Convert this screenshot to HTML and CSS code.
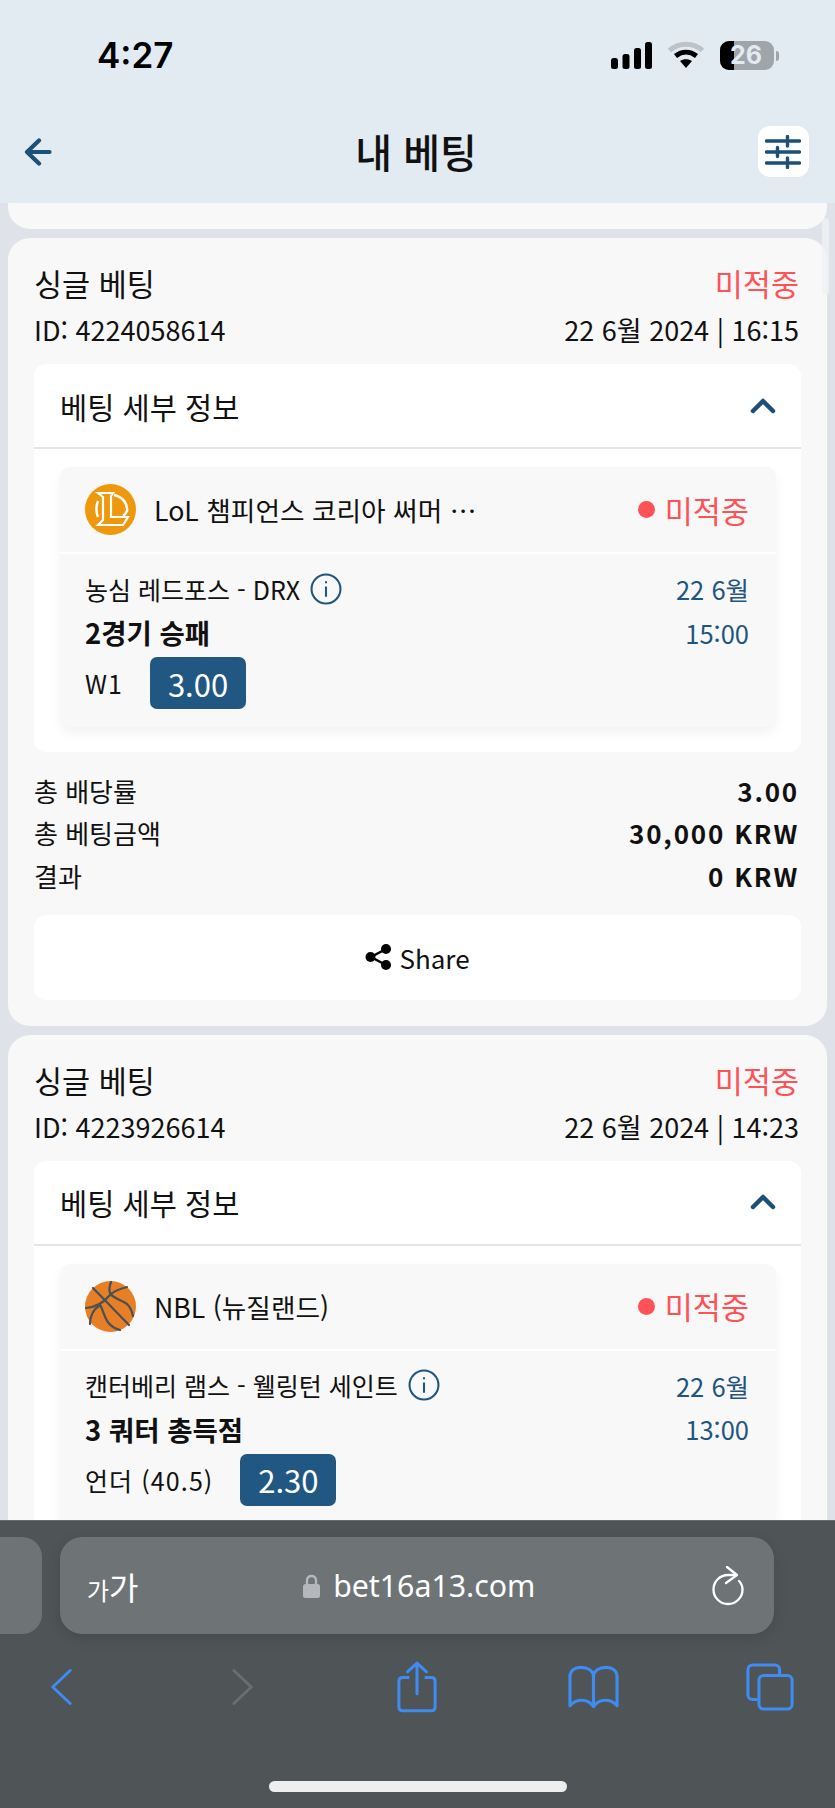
FILE: index.html
```html
<!DOCTYPE html>
<html lang="ko">
<head>
    <meta charset="UTF-8">
    <meta name="viewport" content="width=device-width, initial-scale=1.0">
    <title>내 베팅</title>
    <link rel="stylesheet" href="styles.css">
</head>
<body>
    <div class="phone">
        <div class="top-area">
            <div class="status-bar">
                <span class="clock">4:27</span>
                <div class="status-icons">
                    <svg class="signal" width="41" height="27" viewBox="0 0 41 27">
                        <rect x="0" y="16" width="7" height="11" rx="2.500"/>
                        <rect x="11.500" y="12" width="7" height="15" rx="2.500"/>
                        <rect x="23" y="6" width="7" height="21" rx="2.500"/>
                        <rect x="34" y="0" width="7" height="27" rx="2.500"/>
                    </svg>
                    <svg class="wifi" width="36" height="28" viewBox="0 0 36 28">
                        <path d="M1.500 9.500C10.500 1 25.500 1 34.500 9.500" fill="none" stroke="#bcc4c9" stroke-width="5"/>
                        <path d="M7.500 15C14 10 22 10 28.500 15" fill="none" stroke="#000" stroke-width="5"/>
                        <path d="M12 20C15.500 17.500 20.500 17.500 24 20L18 27Z" fill="#000"/>
                    </svg>
                    <div class="battery">
                        <div class="battery-body">
                            <div class="battery-level"></div>
                            <span class="battery-text">26</span>
                        </div>
                        <div class="battery-tip"></div>
                    </div>
                </div>
            </div>
            <div class="nav-bar">
                <svg class="back-icon" width="28" height="28" viewBox="0 0 28 28">
                    <path d="M15 2.500L3 14L15 25.500M3 14H25.500" fill="none" stroke="#1d5077" stroke-width="4.200" stroke-linecap="round" stroke-linejoin="round"/>
                </svg>
                <h1 class="page-title">내 베팅</h1>
                <button class="filter-btn">
                    <svg width="36" height="34" viewBox="0 0 36 34">
                        <path d="M1.500 6H34.500M22.500 1.500V11M1.500 17H34.500M12.500 12.500V21.500M1.500 28H34.500M22.500 23V32.500" fill="none" stroke="#1d5077" stroke-width="3.400" stroke-linecap="round"/>
                    </svg>
                </button>
            </div>
        </div>

        <div class="bets">
            <div class="scroll-thumb"></div>
            <div class="bet-stub"></div>

            <div class="bet-card">
                <div class="bet-head">
                    <span class="bet-type">싱글 베팅</span>
                    <span class="bet-lost">미적중</span>
                </div>
                <div class="bet-meta">
                    <span>ID: 4224058614</span>
                    <span>22 6월 2024 | 16:15</span>
                </div>
                <div class="details">
                    <div class="details-head">
                        <span>베팅 세부 정보</span>
                        <svg width="26" height="16" viewBox="0 0 26 16">
                            <path d="M3 13L13 3L23 13" fill="none" stroke="#1d5077" stroke-width="4.500" stroke-linecap="round" stroke-linejoin="round"/>
                        </svg>
                    </div>
                    <div class="match">
                        <div class="match-head">
                            <svg class="league-logo" width="51" height="51" viewBox="0 0 51 51">
                                <circle cx="25.500" cy="25.500" r="25.500" fill="#ee980e"/>
                                <path d="M13 9H28L26 12V33H43L38 41H13L18 36V13Z" fill="none" stroke="#fff" stroke-width="2.200"/>
                                <path d="M29 11C38 13 43 20 42 27C41 29 40 31 38 32" fill="none" stroke="#fff" stroke-width="2.500"/>
                                <path d="M13 17C11 22 11 28 13 33" fill="none" stroke="#fff" stroke-width="2.500"/>
                            </svg>
                            <span class="league-name">LoL 챔피언스 코리아 써머 …</span>
                            <span class="match-status"><i class="dot"></i>미적중</span>
                        </div>
                        <div class="match-body">
                            <div class="match-row">
                                <span class="teams">농심 레드포스 - DRX
                                    <svg class="info" width="32" height="32" viewBox="0 0 31 31">
                                        <circle cx="15.500" cy="15.500" r="14" fill="none" stroke="#1f5580" stroke-width="2"/>
                                        <path d="M15.500 13V23M15.500 8V10" fill="none" stroke="#1f5580" stroke-width="2"/>
                                    </svg>
                                </span>
                                <span class="match-date">22 6월</span>
                            </div>
                            <div class="match-row">
                                <span class="market">2경기 승패</span>
                                <span class="match-date">15:00</span>
                            </div>
                            <div class="pick">
                                <span>W1</span>
                                <span class="odds">3.00</span>
                            </div>
                        </div>
                    </div>
                </div>
                <div class="totals">
                    <div class="total-row"><span>총 배당률</span><b>3.00</b></div>
                    <div class="total-row"><span>총 베팅금액</span><b>30,000 KRW</b></div>
                    <div class="total-row"><span>결과</span><b>0 KRW</b></div>
                </div>
                <button class="share-btn">
                    <svg width="27" height="26" viewBox="0 0 27 26">
                        <path d="M21 5L6 13L21 21" fill="none" stroke="#000" stroke-width="2.500"/>
                        <circle cx="21" cy="5" r="5"/>
                        <circle cx="5.500" cy="13" r="5"/>
                        <circle cx="21" cy="21" r="5"/>
                    </svg>
                    Share
                </button>
            </div>

            <div class="bet-card">
                <div class="bet-head">
                    <span class="bet-type">싱글 베팅</span>
                    <span class="bet-lost">미적중</span>
                </div>
                <div class="bet-meta">
                    <span>ID: 4223926614</span>
                    <span>22 6월 2024 | 14:23</span>
                </div>
                <div class="details">
                    <div class="details-head">
                        <span>베팅 세부 정보</span>
                        <svg width="26" height="16" viewBox="0 0 26 16">
                            <path d="M3 13L13 3L23 13" fill="none" stroke="#1d5077" stroke-width="4.500" stroke-linecap="round" stroke-linejoin="round"/>
                        </svg>
                    </div>
                    <div class="match">
                        <div class="match-head">
                            <svg class="league-logo" width="51" height="51" viewBox="0 0 51 51">
                                <circle cx="25.500" cy="25.500" r="25.500" fill="#e67f25"/>
                                <g fill="none" stroke="#4a5058" stroke-width="2.200" stroke-linecap="round">
                                    <path d="M8 7L44 44"/>
                                    <path d="M26 1C24 6 24 9 25 12C27 17 35 18 42 23C45 26 47 30 48 35"/>
                                    <path d="M42 6C34 8 28 10 24 15C19 21 12 26 1 27"/>
                                    <path d="M15 24C20 31 19 45 35 49"/>
                                    <path d="M15 24C9 28 5 35 5 43"/>
                                </g>
                            </svg>
                            <span class="league-name">NBL (뉴질랜드)</span>
                            <span class="match-status"><i class="dot"></i>미적중</span>
                        </div>
                        <div class="match-body">
                            <div class="match-row">
                                <span class="teams">캔터베리 램스 - 웰링턴 세인트
                                    <svg class="info" width="32" height="32" viewBox="0 0 31 31">
                                        <circle cx="15.500" cy="15.500" r="14" fill="none" stroke="#1f5580" stroke-width="2"/>
                                        <path d="M15.500 13V23M15.500 8V10" fill="none" stroke="#1f5580" stroke-width="2"/>
                                    </svg>
                                </span>
                                <span class="match-date">22 6월</span>
                            </div>
                            <div class="match-row">
                                <span class="market">3 쿼터 총득점</span>
                                <span class="match-date">13:00</span>
                            </div>
                            <div class="pick">
                                <span>언더 (40.5)</span>
                                <span class="odds">2.30</span>
                            </div>
                        </div>
                    </div>
                </div>
            </div>
        </div>

        <div class="browser-bar">
            <div class="url-row">
                <div class="prev-tab"></div>
                <div class="url-field">
                    <span class="text-size"><small>가</small>가</span>
                    <span class="url">
                        <svg width="17" height="24" viewBox="0 0 17 24">
                            <path d="M4 11V6.500C4 3.500 6 2 8.500 2C11 2 13 3.500 13 6.500V11" fill="none" stroke="#b4b7bc" stroke-width="2.400"/>
                            <rect x="0" y="10" width="17" height="14" rx="2.500" fill="#b4b7bc"/>
                        </svg>
                        bet16a13.com
                    </span>
                    <svg class="reload" width="32" height="40" viewBox="0 0 32 40">
                        <path d="M24 9H16C8 9 1.500 15.500 1.500 23.500C1.500 31.500 8 38 16 38C24 38 30.500 31.500 30.500 23.500C30.500 20 29 17 27 15" fill="none" stroke="#fff" stroke-width="2.300" stroke-linecap="round"/>
                        <path d="M15 1L25 9L14 17" fill="none" stroke="#fff" stroke-width="2.300" stroke-linecap="round" stroke-linejoin="round"/>
                    </svg>
                </div>
            </div>
            <div class="toolbar">
                <svg class="tool-back" width="24" height="40" viewBox="0 0 24 40">
                    <path d="M22 2L3 20L22 38" fill="none" stroke="#3e8bf2" stroke-width="3.200" stroke-linecap="round" stroke-linejoin="round"/>
                </svg>
                <svg class="tool-fwd" width="24" height="40" viewBox="0 0 24 40">
                    <path d="M2 2L21 20L2 38" fill="none" stroke="#696e71" stroke-width="3.200" stroke-linecap="round" stroke-linejoin="round"/>
                </svg>
                <svg class="tool-share" width="42" height="54" viewBox="0 0 42 54">
                    <path d="M13 17H6C3.500 17 2 18.500 2 21V48C2 50.500 3.500 52 6 52H36C38.500 52 40 50.500 40 48V21C40 18.500 38.500 17 36 17H29" fill="none" stroke="#3e8bf2" stroke-width="3.200"/>
                    <path d="M21 34V2M11 11L21 2L31 11" fill="none" stroke="#3e8bf2" stroke-width="3.200" stroke-linecap="round" stroke-linejoin="round"/>
                </svg>
                <svg class="tool-book" width="52" height="44" viewBox="0 0 52 44">
                    <path d="M26 12C26 5 20 2 13 2C7 2 2 5 2 12V41C8 34 20 33 26 42C32 33 44 34 50 41V12C50 5 45 2 39 2C32 2 26 5 26 12V40" fill="none" stroke="#3e8bf2" stroke-width="3.200" stroke-linejoin="round"/>
                </svg>
                <svg class="tool-tabs" width="50" height="50" viewBox="0 0 50 50">
                    <path d="M12 38H7C4 38 2 36 2 33V7C2 4 4 2 7 2H30C33 2 35 4 35 7V12" fill="none" stroke="#3e8bf2" stroke-width="3.200"/>
                    <rect x="13.500" y="13" width="34.500" height="35" rx="5" fill="none" stroke="#3e8bf2" stroke-width="3.200"/>
                </svg>
            </div>
            <div class="home-indicator"></div>
        </div>
    </div>
</body>
</html>
```

FILE: styles.css
```css
* {
    box-sizing: border-box;
}
body {
    margin: 0;
    font-family: "Noto Sans CJK KR", "Noto Sans", sans-serif;
    color: #111;
    background-color: #dfe3e9;
}
button {
    font-family: inherit;
    border: none;
    padding: 0;
}
.phone {
    width: 835px;
    height: 1808px;
    display: flex;
    flex-direction: column;
    overflow: hidden;
}

/* top area */
.top-area {
    height: 203px;
    flex-shrink: 0;
    background-color: #e2eaf2;
}
.status-bar {
    height: 110px;
    padding: 34px 56px 0 97px;
    display: flex;
    justify-content: space-between;
}
.clock {
    font-family: Inter, sans-serif;
    font-weight: 600;
    font-size: 35px;
    line-height: 42px;
    color: #000;
}
.status-icons {
    display: flex;
    gap: 16px;
    height: 29px;
    margin-top: 7px;
    align-items: flex-start;
}
.signal {
    margin-top: 1px;
}
.battery {
    display: flex;
    align-items: center;
    gap: 2px;
}
.battery-body {
    width: 54px;
    height: 29px;
    border-radius: 9px;
    background-color: #9ea5ab;
    overflow: hidden;
    display: flex;
    position: relative;
}
.battery-level {
    width: 14px;
    background-color: #000;
}
.battery-text {
    position: absolute;
    left: 10px;
    top: 0;
    font-family: Inter, sans-serif;
    font-weight: 700;
    font-size: 25px;
    line-height: 29px;
    color: #e2eaf2;
}
.battery-tip {
    width: 3px;
    height: 10px;
    border-radius: 0 3px 3px 0;
    background-color: #9ea5ab;
}
.nav-bar {
    display: flex;
    align-items: center;
    justify-content: space-between;
    padding: 16px 26px 0 24px;
}
.page-title {
    margin: 0 0 0 22px;
    font-size: 40px;
    line-height: 51px;
    font-weight: 500;
    color: #111;
}
.filter-btn {
    width: 51px;
    height: 51px;
    border-radius: 12px;
    background-color: #fff;
    display: flex;
    align-items: center;
    justify-content: center;
}

/* bets list */
.bets {
    flex: 1;
    min-height: 0;
    overflow: hidden;
    padding: 0 8px;
    position: relative;
}
.scroll-thumb {
    position: absolute;
    top: 15px;
    right: 6px;
    width: 7px;
    height: 77px;
    border-radius: 4px;
    background-color: rgba(240, 241, 243, 0.75);
}
.bet-stub {
    height: 26px;
    background-color: #f8f8f8;
    border-radius: 0 0 22px 22px;
    margin-bottom: 9px;
}
.bet-card {
    background-color: #f8f8f8;
    border-radius: 22px;
    padding: 24px 26px 26px;
    margin-bottom: 9px;
}
.bet-head, .bet-meta {
    display: flex;
    justify-content: space-between;
    padding-right: 2px;
}
.bet-head {
    font-size: 30.500px;
    line-height: 42px;
}
.bet-lost {
    color: #ff5257;
}
.bet-meta {
    font-size: 27px;
    line-height: 36px;
    margin-top: 8px;
    margin-bottom: 16px;
}
.details {
    background-color: #fff;
    border-radius: 12px;
    padding-bottom: 25px;
}
.details-head {
    height: 85px;
    padding: 0 25px 0 26px;
    border-bottom: 2px solid #e2e6ec;
    display: flex;
    align-items: center;
    justify-content: space-between;
    font-size: 29.500px;
}
.match {
    margin: 18px 25px 0 26px;
    background-color: #f8f8f8;
    border-radius: 10px;
    box-shadow: 0 6px 12px rgba(0, 0, 0, 0.05);
}
.match-head {
    height: 87px;
    padding: 0 27px 0 25px;
    border-bottom: 2px solid #fff;
    display: flex;
    align-items: center;
}
.league-logo {
    flex-shrink: 0;
}
.league-name {
    font-size: 26.700px;
    margin-left: 18px;
}
.match-status {
    margin-left: auto;
    display: flex;
    align-items: center;
    font-size: 30.500px;
    color: #ff5257;
}
.dot {
    width: 17px;
    height: 17px;
    border-radius: 50%;
    background-color: #ff5257;
    margin-right: 10px;
}
.match-body {
    padding: 13px 27px 18px 25px;
}
.match-row {
    display: flex;
    justify-content: space-between;
    height: 43.500px;
    align-items: center;
    font-size: 25.500px;
}
.teams {
    display: flex;
    align-items: center;
    gap: 10px;
    font-size: 25px;
}
.market {
    font-weight: 700;
    font-size: 27.500px;
}
.match-date {
    color: #1f5580;
}
.pick {
    display: flex;
    align-items: center;
    gap: 27px;
    font-size: 25px;
    letter-spacing: 1.100px;
    margin-top: 3px;
}
.odds {
    width: 96px;
    height: 52px;
    border-radius: 7px;
    background-color: #205783;
    color: #fff;
    font-size: 31px;
    letter-spacing: 0;
    display: flex;
    align-items: center;
    justify-content: center;
}
.totals {
    padding: 17px 2px 18px 0;
}
.total-row {
    display: flex;
    justify-content: space-between;
    align-items: center;
    height: 42.500px;
    font-size: 26px;
}
.total-row b {
    font-weight: 700;
    letter-spacing: 1.800px;
}
.share-btn {
    width: 100%;
    height: 85px;
    border-radius: 12px;
    background-color: #fff;
    color: #111;
    font-size: 26px;
    display: flex;
    align-items: center;
    justify-content: center;
    gap: 7px;
}

/* browser chrome */
.browser-bar {
    height: 288px;
    flex-shrink: 0;
    background-color: #4f5457;
    border-top: 1px solid #666b6e;
}
.url-row {
    display: flex;
    gap: 18px;
    padding-top: 16px;
}
.prev-tab {
    width: 42px;
    height: 97px;
    background-color: #6e7376;
    border-radius: 0 20px 20px 0;
}
.url-field {
    width: 714px;
    height: 97px;
    background-color: #6e7376;
    border-radius: 22px;
    box-shadow: 0 4px 14px rgba(0, 0, 0, 0.12);
    padding: 0 30px 0 27px;
    display: flex;
    align-items: center;
    justify-content: space-between;
    color: #fff;
}
.text-size {
    font-size: 32px;
    line-height: 1;
}
.text-size small {
    font-size: 24px;
}
.url {
    display: flex;
    align-items: center;
    gap: 13px;
    font-family: "Noto Sans", sans-serif;
    font-size: 30.300px;
    margin-right: 12px;
}
.toolbar {
    display: flex;
    align-items: center;
    height: 54px;
    margin-top: 26px;
    padding-left: 50px;
}
.tool-back {
    width: 22px;
}
.tool-fwd {
    width: 22px;
    margin-left: 160px;
}
.tool-share {
    width: 40px;
    margin-left: 143px;
}
.tool-book {
    width: 51px;
    margin-left: 131px;
}
.tool-tabs {
    width: 48px;
    margin-left: 127px;
}
.home-indicator {
    width: 298px;
    height: 11px;
    border-radius: 6px;
    background-color: #eee;
    margin: 67px auto 0;
}
```
